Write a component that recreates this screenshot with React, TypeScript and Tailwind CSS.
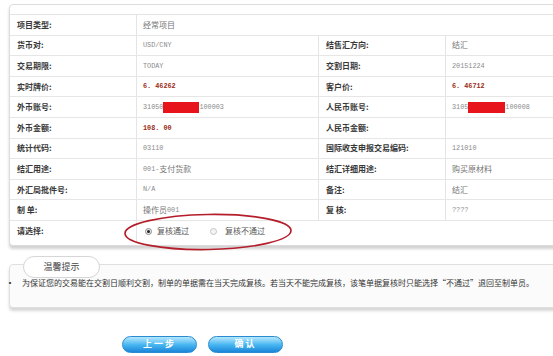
import React from "react";

const A = ({ children, bold, red }: { children: React.ReactNode; bold?: boolean; red?: boolean }) => (
  <span
    className={
      "font-['Liberation_Mono',monospace] text-[6.8px] " +
      (bold ? "font-bold " : "") +
      (red ? "text-[#9a2a16]" : "text-[#8a8a8a]")
    }
  >
    {children}
  </span>
);

const C = ({ children }: { children: React.ReactNode }) => (
  <span className="text-[8px] text-[#767676]">{children}</span>
);

const Redact = ({ w }: { w: number }) => (
  <span className="inline-block h-[11px] bg-[#e8141c]" style={{ width: w }} />
);

type Row = {
  l: string;
  v: React.ReactNode;
  l2?: string;
  v2?: React.ReactNode;
  span?: boolean;
};

const rows: Row[] = [
  { l: "项目类型:", v: <C>经常项目</C>, span: true },
  { l: "货币对:", v: <A>USD/CNY</A>, l2: "结售汇方向:", v2: <C>结汇</C> },
  { l: "交易期限:", v: <A>TODAY</A>, l2: "交割日期:", v2: <A>20151224</A> },
  { l: "实时牌价:", v: <A bold red>6. 46262</A>, l2: "客户价:", v2: <A bold red>6. 46712</A> },
  {
    l: "外币账号:",
    v: (
      <span className="flex items-center">
        <A>31050</A>
        <Redact w={36} />
        <A>100003</A>
      </span>
    ),
    l2: "人民币账号:",
    v2: (
      <span className="flex items-center">
        <A>3105</A>
        <Redact w={37} />
        <A>100008</A>
      </span>
    ),
  },
  { l: "外币金额:", v: <A bold red>108. 00</A>, l2: "人民币金额:", v2: null },
  { l: "统计代码:", v: <A>03110</A>, l2: "国际收支申报交易编码:", v2: <A>121010</A> },
  {
    l: "结汇用途:",
    v: (
      <span className="flex items-center">
        <A>001-</A>
        <C>支付货款</C>
      </span>
    ),
    l2: "结汇详细用途:",
    v2: <C>购买原材料</C>,
  },
  { l: "外汇局批件号:", v: <A>N/A</A>, l2: "备注:", v2: <C>结汇</C> },
  {
    l: "制 单:",
    v: (
      <span className="flex items-center">
        <C>操作员</C>
        <A>001</A>
      </span>
    ),
    l2: "复 核:",
    v2: <A>????</A>,
  },
];

const Label = ({ children }: { children: React.ReactNode }) => (
  <div className="flex items-center pl-[7px] border-r border-[#e4e4e4] text-[8px] font-bold text-[#383838] whitespace-nowrap">
    {children}
  </div>
);

const Value = ({ children, last }: { children: React.ReactNode; last?: boolean }) => (
  <div className={"flex items-center pl-[6px] whitespace-nowrap " + (last ? "" : "border-r border-[#e4e4e4]")}>
    {children}
  </div>
);

export default function App() {
  return (
    <div className="relative w-[553px] h-[356px] overflow-hidden bg-white pt-[4px] font-['Noto_Sans_CJK_SC',sans-serif]">
      {/* main panel */}
      <div className="ml-[9px] w-[560px] border border-[#dcdcdc] rounded-[4px] bg-white pt-[9px] pb-[3px] shadow-[0_3px_3px_rgba(0,0,0,0.18)]">
        <div className="border-t border-[#e4e4e4]">
          {rows.map((r, i) => (
            <div
              key={i}
              className={
                "grid h-[20.6px] border-b border-[#e6e6e6] " +
                (r.span ? "grid-cols-[127px_1fr]" : "grid-cols-[127px_182px_127px_1fr]")
              }
            >
              <Label>{r.l}</Label>
              {r.span ? (
                <Value last>{r.v}</Value>
              ) : (
                <>
                  <Value>{r.v}</Value>
                  <Label>{r.l2}</Label>
                  <Value last>{r.v2}</Value>
                </>
              )}
            </div>
          ))}
          <div className="grid h-[20.6px] grid-cols-[127px_1fr]">
            <Label>请选择:</Label>
            <div className="flex items-center pl-[8px]">
              <span className="flex items-center justify-center w-[7px] h-[7px] rounded-full border border-[#8c8c8c] bg-[#ececec]">
                <span className="w-[3px] h-[3px] rounded-full bg-[#222]" />
              </span>
              <span className="ml-[5px] text-[8px] text-[#555]">复核通过</span>
              <span className="ml-[21px] w-[7px] h-[7px] rounded-full border border-[#c4c4c4] bg-[#f4f4f4]" />
              <span className="ml-[8px] text-[8px] text-[#555]">复核不通过</span>
            </div>
          </div>
        </div>
      </div>

      {/* tips */}
      <div className="relative mt-[18px] ml-[9px] w-[560px] h-[44px] border border-[#e0e0e0] rounded-[4px] bg-[#fbfbfb] pt-[13px] shadow-[0_3px_3px_rgba(0,0,0,0.16)]">
        <div className="absolute left-[13px] top-[-9px] w-[77px] h-[22px] rounded-full border border-[#d6d6d6] bg-white flex items-center justify-center text-[9px] text-[#444]">
          温馨提示
        </div>
        <div className="flex items-center h-[10px] -ml-[4px] text-[8px] text-[#333] whitespace-nowrap">
          <span className="w-[16px] font-bold">·</span>
          <span>
            为保证您的交易能在交割日顺利交割，制单的单据需在当天完成复核。若当天不能完成复核，该笔单据复核时只能选择“不通过”退回至制单员。
          </span>
        </div>
      </div>

      {/* buttons */}
      <div className="flex gap-[11px] pl-[122px] mt-[28px]">
        <div className="w-[75px] h-[17px] rounded-full border border-[#2a8ad0] bg-linear-to-b from-[#b3e8fd] via-[#4ab8f2] to-[#1a86d8] flex items-center justify-center text-white text-[9px] font-bold tracking-[2px]">
          上一步
        </div>
        <div className="w-[75px] h-[17px] rounded-full border border-[#2a8ad0] bg-linear-to-b from-[#b3e8fd] via-[#4ab8f2] to-[#1a86d8] flex items-center justify-center text-white text-[9px] font-bold tracking-[2px]">
          确认
        </div>
      </div>

      {/* red annotation ellipse */}
      <svg className="absolute left-[120px] top-[210px]" width="176" height="44" viewBox="0 0 176 44">
        <ellipse
          cx="88"
          cy="22"
          rx="83"
          ry="17.5"
          transform="rotate(-1 88 22)"
          fill="none"
          stroke="#b41d2a"
          strokeWidth="1.7"
        />
      </svg>
    </div>
  );
}
